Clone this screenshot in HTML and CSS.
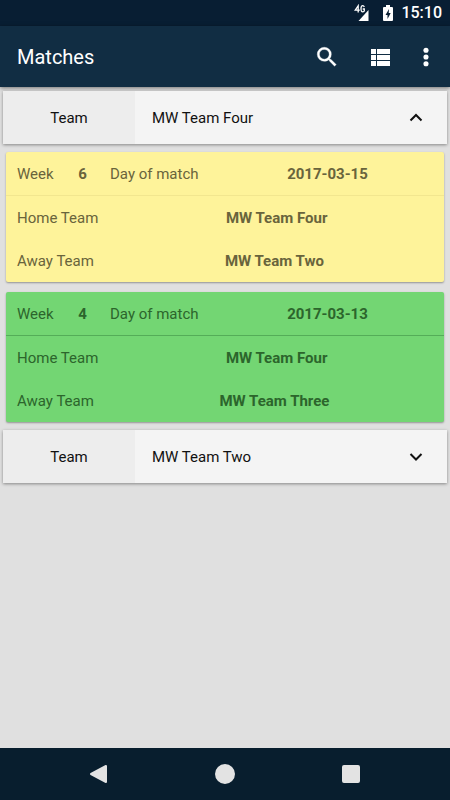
FILE: index.html
```
<!DOCTYPE html>
<html lang="en">
<head>
<meta charset="utf-8">
<meta name="viewport" content="width=device-width, initial-scale=1">
<title>Matches</title>
<link rel="stylesheet" href="styles.css">
</head>
<body>
<div class="status-bar">
  <svg class="status-signal" viewBox="0 0 16 18" width="16" height="18" role="img" aria-label="Mobile signal">
    <g fill="none" stroke="#fff" stroke-width="1.300">
      <path d="M4.200 8.500V1.800L1.200 6.200H5.800"/>
      <path d="M10.300 3Q9.800 1.700 8.700 1.700Q7 1.700 7 4.800Q7 7.800 8.700 7.800Q10.300 7.800 10.300 6.800V5H8.700"/>
    </g>
    <path d="M14.500 6v11H4.500z" fill="#fff"/>
  </svg>
  <svg class="status-battery" viewBox="0 0 12 18" width="12" height="18" role="img" aria-label="Battery charging">
    <path d="M4 1h4v2h2q1 0 1 1v12q0 1-1 1H2q-1 0-1-1V4q0-1 1-1h2z" fill="#fff"/>
    <path d="M7 5L3.500 11H5.500V15L8.700 9H6.700z" fill="#0a1f33"/>
  </svg>
  <time class="status-time">15:10</time>
</div>
<header class="app-bar">
  <h1 class="app-title">Matches</h1>
  <button class="icon-button" type="button" aria-label="Search">
    <svg viewBox="0 0 24 24" width="26" height="26" fill="#fff" stroke="#fff" stroke-width=".3"><path d="M15.500 14h-.79l-.28-.27A6.470 6.470 0 0 0 16 9.500 6.500 6.500 0 1 0 9.500 16c1.610 0 3.090-.59 4.230-1.570l.27.28v.79l5 4.990L20.490 19l-4.990-5zm-6 0a4.500 4.500 0 1 1 0-9 4.500 4.500 0 0 1 0 9z"/></svg>
  </button>
  <button class="icon-button" type="button" aria-label="List view">
    <svg viewBox="0 0 26 26" width="26" height="26" fill="#fff"><path d="M3 5h5v5H3zM9 5h13v5H9zM3 11h5v5H3zM9 11h13v5H9zM3 17h5v5H3zM9 17h13v5H9z"/></svg>
  </button>
  <button class="icon-button icon-button-narrow" type="button" aria-label="More options">
    <svg viewBox="0 0 24 24" width="28" height="28" fill="#fff"><circle cx="12" cy="6.200" r="2.200"/><circle cx="12" cy="12" r="2.200"/><circle cx="12" cy="17.800" r="2.200"/></svg>
  </button>
</header>
<main class="content">
  <button class="group" type="button" aria-expanded="true">
    <span class="group-label">Team</span>
    <span class="group-name">MW Team Four</span>
    <svg class="chevron" viewBox="0 0 16 16" width="16" height="16"><path d="M2.500 10.500L8 5l5.500 5.500"/></svg>
  </button>
  <section class="matches">
    <article class="match match-yellow">
      <dl class="match-head">
        <dt>Week</dt><dd>6</dd><dt class="day">Day of match</dt><dd>2017-03-15</dd>
      </dl>
      <dl class="match-row"><dt>Home Team</dt><dd>MW Team Four</dd></dl>
      <dl class="match-row"><dt>Away Team</dt><dd>MW Team Two</dd></dl>
    </article>
    <article class="match match-green">
      <dl class="match-head">
        <dt>Week</dt><dd>4</dd><dt class="day">Day of match</dt><dd>2017-03-13</dd>
      </dl>
      <dl class="match-row"><dt>Home Team</dt><dd>MW Team Four</dd></dl>
      <dl class="match-row"><dt>Away Team</dt><dd>MW Team Three</dd></dl>
    </article>
  </section>
  <button class="group" type="button" aria-expanded="false">
    <span class="group-label">Team</span>
    <span class="group-name">MW Team Two</span>
    <svg class="chevron" viewBox="0 0 16 16" width="16" height="16"><path d="M2.500 5L8 10.500L13.500 5"/></svg>
  </button>
</main>
<nav class="nav-bar" aria-label="System">
  <button class="nav-button" type="button" aria-label="Back">
    <svg viewBox="0 0 20 20" width="20" height="20"><path d="M17 2v16L2 10z"/></svg>
  </button>
  <button class="nav-button" type="button" aria-label="Home">
    <svg viewBox="0 0 20 20" width="20" height="20"><circle cx="10" cy="10" r="9"/></svg>
  </button>
  <button class="nav-button" type="button" aria-label="Recent apps">
    <svg viewBox="0 0 20 20" width="20" height="20"><rect x="2" y="2" width="16" height="16" rx="1"/></svg>
  </button>
</nav>
</body>
</html>
```
FILE: styles.css
```
* {
  box-sizing: border-box;
}

body {
  margin: 0;
  min-height: 100vh;
  display: flex;
  flex-direction: column;
  background: #e0e0e0;
  font: 15px/20px Roboto, "Liberation Sans", sans-serif;
}

button {
  margin: 0;
  padding: 0;
  border: 0;
  background: none;
  color: inherit;
  font: inherit;
}

svg {
  display: block;
}

.status-bar {
  display: flex;
  align-items: center;
  justify-content: flex-end;
  height: 26px;
  padding-right: 8px;
  background: #081e33;
  color: #fff;
}

.status-signal {
  margin-right: 12px;
}

.status-battery {
  margin-right: 7px;
}

.status-time {
  font-size: 16px;
  font-weight: 500;
  line-height: 28px;
}

.app-bar {
  display: flex;
  align-items: center;
  height: 61px;
  padding: 0 6px 0 17px;
  background: #112d43;
  color: #fff;
  box-shadow: 0 1px 4px rgba(0, 0, 0, 0.5);
}

.app-title {
  flex: 1;
  margin: 0;
  font-size: 20px;
  font-weight: 400;
  line-height: 24px;
}

.icon-button {
  display: flex;
  align-items: center;
  justify-content: center;
  width: 54px;
  height: 48px;
}

.icon-button-narrow {
  width: 36px;
}

.content {
  flex: 1;
  padding: 4px 3px;
}

.group {
  display: flex;
  align-items: center;
  width: 100%;
  height: 53px;
  padding-right: 23px;
  background: #f4f4f4;
  color: #111;
  text-align: left;
  box-shadow: 0 1px 3px rgba(0, 0, 0, 0.4);
}

.group-label {
  align-self: stretch;
  width: 132px;
  background: #ededed;
  line-height: 54px;
  text-align: center;
}

.group-name {
  flex: 1;
  padding-left: 17px;
}

.chevron {
  fill: none;
  stroke: #111;
  stroke-width: 2;
}

.matches {
  display: flex;
  flex-direction: column;
  gap: 10px;
  padding: 8px 3px;
}

.match {
  border-radius: 2px;
  box-shadow: 0 1px 2px rgba(0, 0, 0, 0.35);
}

.match-yellow {
  background: #fef39a;
  color: #69643c;
}

.match-green {
  background: #73d673;
  color: #2c652c;
}

.match-head,
.match-row {
  display: grid;
  align-items: center;
  height: 43px;
  margin: 0;
  padding: 0 11px;
}

.match-head {
  grid-template-columns: 50px 31px 124px 1fr;
  height: 44px;
  border-bottom: 1px solid #f2e68f;
}

.match-green .match-head {
  border-bottom-color: #54ad58;
}

.match-row {
  grid-template-columns: auto 1fr;
  column-gap: 22px;
}

.day {
  padding-left: 12px;
}

dd {
  margin: 0;
  font-weight: 700;
  text-align: center;
}

.nav-bar {
  display: flex;
  justify-content: center;
  height: 52px;
  background: #081e2e;
}

.nav-button {
  display: flex;
  align-items: center;
  justify-content: center;
  width: 28%;
}

.nav-button svg {
  fill: #e3e3e3;
  stroke: #e3e3e3;
  stroke-width: 2;
  stroke-linejoin: round;
}
```
